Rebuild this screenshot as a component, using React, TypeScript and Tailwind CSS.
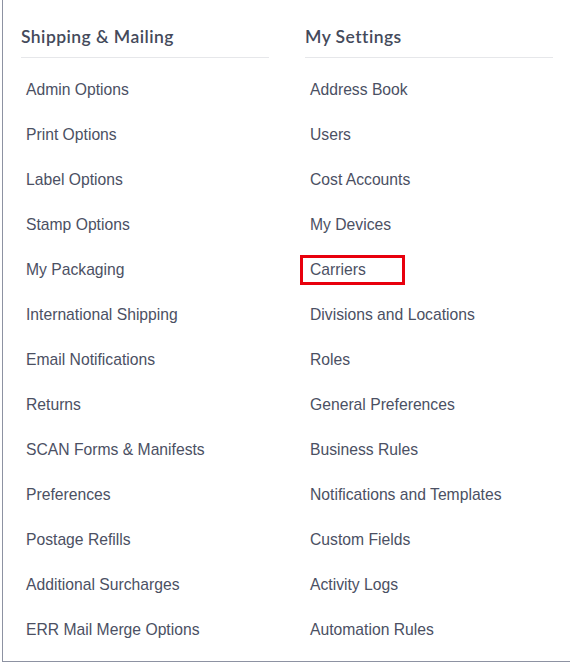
const shipping = [
  "Admin Options",
  "Print Options",
  "Label Options",
  "Stamp Options",
  "My Packaging",
  "International Shipping",
  "Email Notifications",
  "Returns",
  "SCAN Forms & Manifests",
  "Preferences",
  "Postage Refills",
  "Additional Surcharges",
  "ERR Mail Merge Options",
];

const settings = [
  "Address Book",
  "Users",
  "Cost Accounts",
  "My Devices",
  "Carriers",
  "Divisions and Locations",
  "Roles",
  "General Preferences",
  "Business Rules",
  "Notifications and Templates",
  "Custom Fields",
  "Activity Logs",
  "Automation Rules",
];

function MenuColumn({
  title,
  items,
  highlight,
}: {
  title: string;
  items: string[];
  highlight?: string;
}) {
  return (
    <div className="w-[248px]">
      <div className="border-b border-[#e6e7ea] pb-[8px] pt-[25px]">
        <h3 className="font-['Lato',sans-serif] text-[17.5px] font-semibold leading-[24px] tracking-[0.45px] text-[#444a5b]">
          {title}
        </h3>
      </div>
      <ul className="mt-[9px]">
        {items.map((item) => (
          <li key={item} className="flex h-[45px] items-center pl-[5px]">
            <a
              href="#"
              className="relative font-['Liberation_Sans',Arial,sans-serif] text-[15.7px] leading-[20px] text-[#4b5063]"
            >
              {item}
              {item === highlight && (
                <span className="absolute -left-[10px] -top-[5px] h-[30px] w-[105px] border-[3px] border-[#e8000d]" />
              )}
            </a>
          </li>
        ))}
      </ul>
    </div>
  );
}

export default function App() {
  return (
    <div className="h-[664px] w-[570px] bg-white pl-[2px]">
      <div className="flex h-[662px] gap-[36px] border-b border-l border-[#8d92a2] pl-[18px]">
        <MenuColumn title="Shipping & Mailing" items={shipping} />
        <MenuColumn title="My Settings" items={settings} highlight="Carriers" />
      </div>
    </div>
  );
}
